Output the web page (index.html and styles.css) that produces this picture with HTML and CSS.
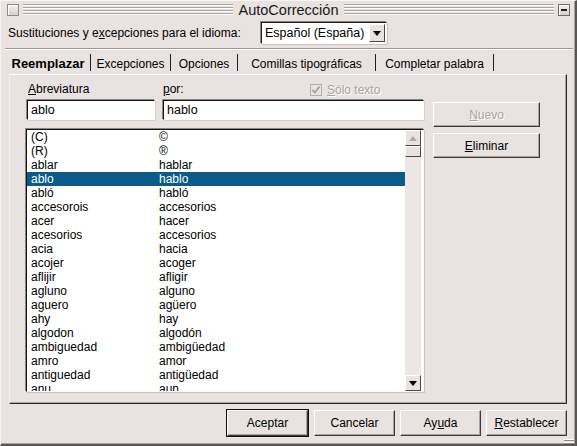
FILE: index.html
```html
<!DOCTYPE html>
<html lang="es">
<head>
<meta charset="utf-8">
<title>AutoCorrección</title>
<link rel="stylesheet" href="styles.css">
</head>
<body>
<div class="window">
  <div class="titlebar">
    <span class="tbtn"></span>
    <span class="groove"></span>
    <span class="title">AutoCorrección</span>
    <span class="groove"></span>
    <span class="tbtn min"><span class="dash"></span></span>
  </div>

  <div class="langrow">
    <span class="langlabel">Sustituciones y e<u>x</u>cepciones para el idioma:</span>
    <div class="combo">
      <span class="combo-text">Español (España)</span>
      <span class="combo-btn"><span class="arrow-down"></span></span>
    </div>
  </div>
  <div class="sep"></div>

  <div class="tabs">
    <span class="tab active">Reemplazar</span>
    <span class="tab t2">Excepciones</span>
    <span class="tab t3">Opciones</span>
    <span class="tab t4">Comillas tipográficas</span>
    <span class="tab t5">Completar palabra</span>
  </div>

  <div class="panel">
    <div class="left">
      <div class="labels">
        <span class="lab-abr"><u>A</u>breviatura</span>
        <span class="lab-por"><u>p</u>or:</span>
        <span class="chk">
          <span class="chkbox"><svg width="10" height="10" viewBox="0 0 10 10"><path d="M1.5 5 L4 7.5 L8.5 1.5" fill="none" stroke="#a6a2a0" stroke-width="1.8"/></svg></span>
          <span class="dis"><u>S</u>ólo texto</span>
        </span>
      </div>
      <div class="inputs">
        <div class="field f1">ablo</div>
        <div class="field f2">hablo</div>
      </div>
      <div class="list">
        <div class="rows">
          <div class="row"><span class="c1">(C)</span><span class="c2">©</span></div>
          <div class="row"><span class="c1">(R)</span><span class="c2">®</span></div>
          <div class="row"><span class="c1">ablar</span><span class="c2">hablar</span></div>
          <div class="row sel"><span class="c1">ablo</span><span class="c2">hablo</span></div>
          <div class="row"><span class="c1">abló</span><span class="c2">habló</span></div>
          <div class="row"><span class="c1">accesorois</span><span class="c2">accesorios</span></div>
          <div class="row"><span class="c1">acer</span><span class="c2">hacer</span></div>
          <div class="row"><span class="c1">acesorios</span><span class="c2">accesorios</span></div>
          <div class="row"><span class="c1">acia</span><span class="c2">hacia</span></div>
          <div class="row"><span class="c1">acojer</span><span class="c2">acoger</span></div>
          <div class="row"><span class="c1">aflijir</span><span class="c2">afligir</span></div>
          <div class="row"><span class="c1">agluno</span><span class="c2">alguno</span></div>
          <div class="row"><span class="c1">aguero</span><span class="c2">agüero</span></div>
          <div class="row"><span class="c1">ahy</span><span class="c2">hay</span></div>
          <div class="row"><span class="c1">algodon</span><span class="c2">algodón</span></div>
          <div class="row"><span class="c1">ambiguedad</span><span class="c2">ambigüedad</span></div>
          <div class="row"><span class="c1">amro</span><span class="c2">amor</span></div>
          <div class="row"><span class="c1">antiguedad</span><span class="c2">antigüedad</span></div>
          <div class="row"><span class="c1">anu</span><span class="c2">aun</span></div>
        </div>
        <div class="scrollbar">
          <div class="sbtn"><span class="arrow-up"></span></div>
          <div class="thumb"></div>
          <div class="track"></div>
          <div class="sbtn"><span class="arrow-down"></span></div>
        </div>
      </div>
    </div>
    <div class="right">
      <div class="btn disabled"><u>N</u>uevo</div>
      <div class="btn"><u>E</u>liminar</div>
    </div>
  </div>

  <div class="footer">
    <div class="btn fbtn default">Aceptar</div>
    <div class="btn fbtn">Cancelar</div>
    <div class="btn fbtn">Ay<u>u</u>da</div>
    <div class="btn fbtn"><u>R</u>establecer</div>
  </div>
  <div class="grip"></div>
</div>
</body>
</html>
```

FILE: styles.css
```css
* { box-sizing: border-box; }
html, body { margin: 0; padding: 0; background: #e8e2e0; }
body {
  font-family: "Liberation Sans", Arial, sans-serif;
  font-size: 12px;
  color: #000;
}
u { text-decoration: underline; text-underline-offset: 1px; }

.window {
  position: relative;
  width: 577px;
  height: 446px;
  background: #e8e2e0;
  border-top: 1px solid #f8f4f2;
  border-left: 1px solid #f8f4f2;
  border-right: 2px solid #5a5654;
  border-bottom: 2px solid #5a5654;
  box-shadow: inset -1px -1px 0 #a9a4a2;
  display: flex;
  flex-direction: column;
}

/* title bar */
.titlebar {
  height: 17px;
  display: flex;
  align-items: center;
  padding: 1px 5px 0 6px;
}
.tbtn {
  width: 12px;
  height: 12px;
  border: 1px solid #8e8a88;
  background: linear-gradient(#f4f0ee, #d6d0ce);
  box-shadow: inset 1px 1px 0 #ffffff;
  display: flex;
  align-items: center;
  justify-content: center;
  flex: none;
}
.tbtn.min { border-color: #6e6a68; }
.dash { width: 6px; height: 2px; background: #222; }
.groove {
  flex: 1;
  height: 12px;
  margin: 0 4px;
  background: repeating-linear-gradient(to bottom, #aaa5a3 0, #aaa5a3 1px, #ffffff 1px, #ffffff 2px, transparent 2px, transparent 3px);
}
.groove:first-of-type { margin-left: 3px; }
.title {
  font-size: 14.5px;
  color: #1a1a1a;
  padding: 0 2px;
  line-height: 17px;
}

/* language row */
.langrow {
  display: flex;
  align-items: center;
  height: 22px;
  margin-top: 4px;
  padding-left: 7px;
}
.langlabel { width: 253px; }
.combo {
  width: 126px;
  height: 22px;
  display: flex;
  align-items: center;
  background: #fff;
  border-top: 1px solid #1a1a1a;
  border-left: 1px solid #1a1a1a;
  border-right: 1px solid #ffffff;
  border-bottom: 1px solid #ffffff;
  box-shadow: -1px -1px 0 #8a8684, 1px 1px 0 #c8c2c0;
}
.combo-text { flex: 1; padding-left: 3px; font-size: 12.5px; }
.combo-btn {
  width: 16px;
  height: 18px;
  margin-right: 1px;
  background: #e8e2e0;
  border-top: 1px solid #fff;
  border-left: 1px solid #fff;
  border-right: 1px solid #4a4644;
  border-bottom: 1px solid #4a4644;
  display: flex;
  align-items: center;
  justify-content: center;
}
.arrow-down {
  width: 0; height: 0;
  border-left: 4px solid transparent;
  border-right: 4px solid transparent;
  border-top: 5px solid #000;
}
.arrow-up {
  width: 0; height: 0;
  border-left: 4px solid transparent;
  border-right: 4px solid transparent;
  border-bottom: 5px solid #b0aba9;
}

.sep {
  height: 2px;
  margin: 4px 2px 0 4px;
  border-top: 1px solid #9c9896;
  border-bottom: 1px solid #ffffff;
}

/* tabs */
.tabs {
  display: flex;
  height: 21px;
  margin-top: 3px;
  padding-left: 8px;
  align-items: stretch;
}
.tab {
  display: flex;
  align-items: center;
  justify-content: center;
  border-right: 1px solid #1e1e1e;
  padding-top: 2px;
  margin-bottom: 3px;
  margin-top: 1px;
  flex: none;
}
.tab.active { width: 82px; font-weight: bold; font-size: 13px; padding-right: 3px; }
.t2 { width: 80px; }
.t3 { width: 67px; }
.t4 { width: 138px; }
.t5 { width: 118px; }

/* panel */
.panel {
  height: 330px;
  margin: 0 8px 0 8px;
  border-top: 1px solid #ffffff;
  border-left: 1px solid #f4f0ee;
  border-right: 1px solid #2a2a2a;
  border-bottom: 1px solid #2a2a2a;
  box-shadow: inset -1px -1px 0 #a9a4a2;
  display: flex;
  padding: 7px 0 0 16px;
}
.left { width: 398px; display: flex; flex-direction: column; }
.labels {
  height: 18px;
  display: flex;
  align-items: flex-start;
}
.lab-abr { margin-left: 2px; width: 135px; }
.lab-por { width: 147px; }
.chk { display: flex; align-items: center; gap: 5px; margin-top: 1px; }
.chkbox {
  width: 12px; height: 12px;
  border: 1px solid #b4afad;
  background: #e8e2e0;
  display: flex; align-items: center; justify-content: center;
}
.dis { color: #a9a4a2; text-shadow: 1px 1px 0 #fff; }

.inputs { display: flex; height: 20px; }
.field {
  height: 20px;
  background: #fff;
  border-top: 1px solid #141414;
  border-left: 1px solid #141414;
  border-right: 1px solid #ffffff;
  border-bottom: 1px solid #ffffff;
  box-shadow: -1px -1px 0 #8a8684, 1px 1px 0 #d4cecc;
  padding-left: 3px;
  line-height: 18px;
  font-size: 12.5px;
}
.f1 { width: 128px; margin-left: 1px; }
.f2 { width: 261px; margin-left: 8px; }

.list {
  margin-top: 9px;
  width: 398px;
  height: 263px;
  background: #fff;
  border-top: 1px solid #141414;
  border-left: 1px solid #141414;
  border-right: 1px solid #fbfbfb;
  border-bottom: 1px solid #fbfbfb;
  box-shadow: -1px -1px 0 #8a8684, 1px 1px 0 #c9c3c1;
  display: flex;
  overflow: hidden;
}
.rows { width: 378px; overflow: hidden; }
.row { height: 14px; line-height: 14px; display: flex; white-space: nowrap; }
.row .c1 { width: 132px; padding-left: 4px; }
.row.sel { background: #0c5a89; color: #fff; }

.scrollbar {
  width: 16px;
  margin-right: 2px;
  display: flex;
  flex-direction: column;
  background: #ece7e5;
}
.sbtn {
  height: 16px;
  background: #e8e2e0;
  border-top: 1px solid #ffffff;
  border-left: 1px solid #ffffff;
  border-right: 1px solid #4c4846;
  border-bottom: 1px solid #4c4846;
  display: flex; align-items: center; justify-content: center;
  flex: none;
}
.thumb {
  height: 11px;
  background: #e8e2e0;
  border-top: 1px solid #ffffff;
  border-left: 1px solid #ffffff;
  border-right: 1px solid #4c4846;
  border-bottom: 1px solid #4c4846;
  flex: none;
}
.track { flex: 1; }

.right {
  margin-left: 9px;
  padding-top: 20px;
  display: flex;
  flex-direction: column;
  gap: 6px;
}
.btn {
  width: 107px;
  height: 25px;
  flex: none;
  display: flex; align-items: center; justify-content: center;
  background: #e8e2e0;
  border-top: 1px solid #ffffff;
  border-left: 1px solid #ffffff;
  border-right: 1px solid #3c3836;
  border-bottom: 1px solid #3c3836;
  box-shadow: inset -1px -1px 0 #a9a4a2;
}
.btn.disabled { color: #a9a4a2; text-shadow: 1px 1px 0 #fff; }

.footer {
  display: flex;
  justify-content: flex-end;
  gap: 5px;
  margin-top: 6px;
  padding-right: 8px;
}
.fbtn { width: 81px; height: 26px; }
.fbtn.default { outline: 1px solid #111; outline-offset: 0; margin-right: 1px; }

.grip {
  position: absolute;
  right: 1px;
  bottom: 0;
  width: 10px;
  height: 5px;
  background: repeating-linear-gradient(to bottom, #ffffff 0, #ffffff 1px, #8c8886 1px, #8c8886 2px, transparent 2px, transparent 3px);
}
```
